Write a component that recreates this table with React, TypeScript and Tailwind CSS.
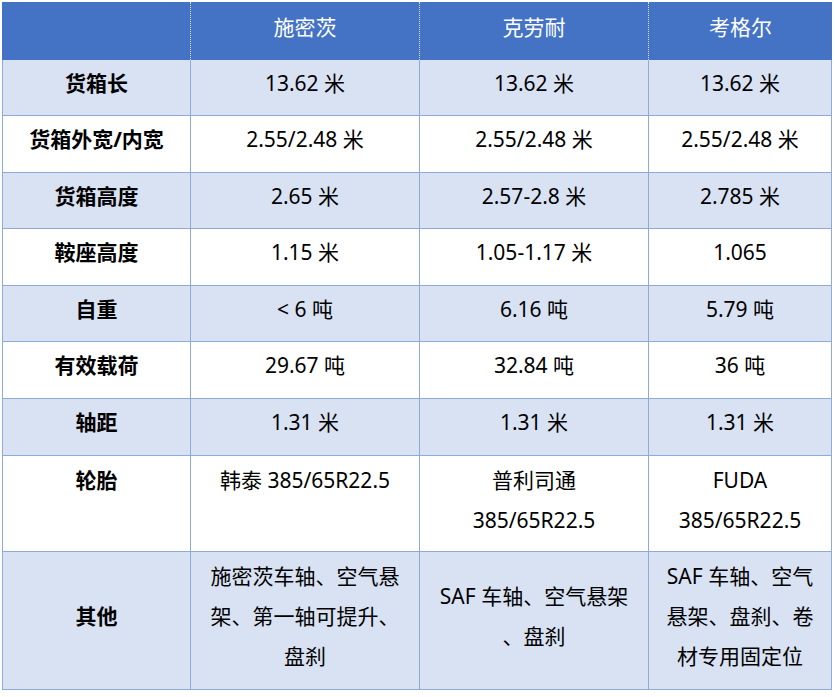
const font = { fontFamily: '"Noto Sans", "Noto Sans CJK SC", sans-serif' };

type Row = {
  label: string;
  cells: React.ReactNode[];
  h: string;
  top?: boolean;
};

const rows: Row[] = [
  { label: "货箱长", cells: ["13.62 米", "13.62 米", "13.62 米"], h: "h-[56px]" },
  { label: "货箱外宽/内宽", cells: ["2.55/2.48 米", "2.55/2.48 米", "2.55/2.48 米"], h: "h-[57px]" },
  { label: "货箱高度", cells: ["2.65 米", "2.57-2.8 米", "2.785 米"], h: "h-[56px]" },
  { label: "鞍座高度", cells: ["1.15 米", "1.05-1.17 米", "1.065"], h: "h-[57px]" },
  { label: "自重", cells: ["< 6 吨", "6.16 吨", "5.79 吨"], h: "h-[56px]" },
  { label: "有效载荷", cells: ["29.67 吨", "32.84 吨", "36 吨"], h: "h-[57px]" },
  { label: "轴距", cells: ["1.31 米", "1.31 米", "1.31 米"], h: "h-[57px]" },
  {
    label: "轮胎",
    cells: [
      "韩泰 385/65R22.5",
      <>普利司通<br />385/65R22.5</>,
      <>FUDA<br />385/65R22.5</>,
    ],
    h: "h-[96px]",
    top: true,
  },
  {
    label: "其他",
    cells: [
      <>施密茨车轴、空气悬<br />架、第一轴可提升、<br />盘刹</>,
      <>SAF 车轴、空气悬架<br />、盘刹</>,
      <>SAF 车轴、空气<br />悬架、盘刹、卷<br />材专用固定位</>,
    ],
    h: "h-[138px]",
  },
];

const heads = ["", "施密茨", "克劳耐", "考格尔"];

export default function App() {
  return (
    <div className="min-h-screen bg-white pt-[2px] pl-[2px]" style={font}>
      <div className="grid w-[830px] grid-cols-[189px_229px_229px_183px] text-[21px] leading-[40px] text-black">
        {heads.map((h, i) => (
          <div
            key={i}
            className={`flex h-[58px] items-center justify-center bg-[#4472C4] pb-[8px] text-white ${
              i < 3 ? "border-r border-dotted border-white/80" : ""
            }`}
          >
            {h}
          </div>
        ))}
        {rows.map((r, ri) => {
          const bg = ri % 2 === 0 ? "bg-[#D9E2F3]" : "bg-white";
          const align = r.top ? "items-start pt-[4px]" : "items-center pb-[10px]";
          return [
            <div
              key={`l${ri}`}
              className={`flex ${r.h} ${bg} ${align} justify-center border-b border-l border-r border-[#8EAADB] font-bold`}
            >
              {r.label}
            </div>,
            ...r.cells.map((c, ci) => (
              <div
                key={`c${ri}-${ci}`}
                className={`flex ${r.h} ${bg} ${align} justify-center border-b border-r border-[#8EAADB] text-center`}
              >
                <div>{c}</div>
              </div>
            )),
          ];
        })}
      </div>
    </div>
  );
}
